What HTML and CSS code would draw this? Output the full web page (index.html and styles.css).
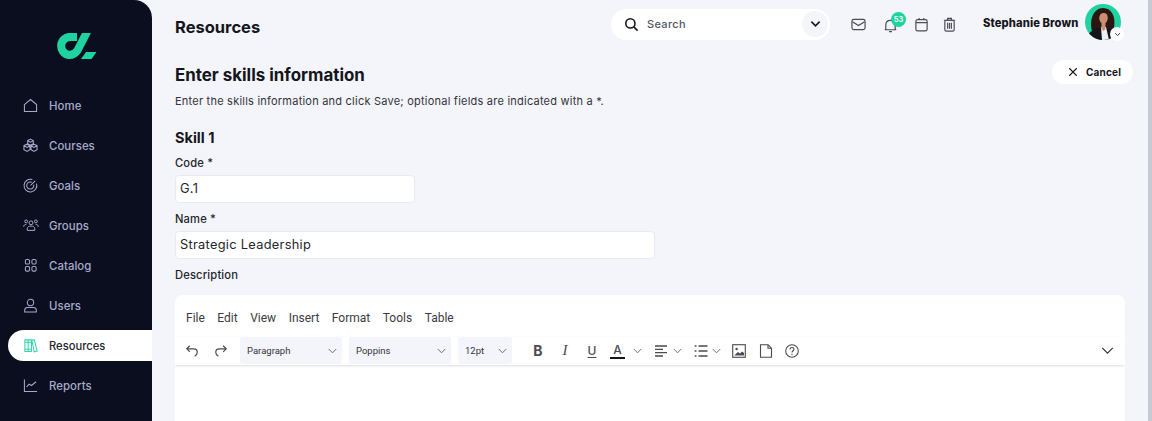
FILE: index.html
```html
<!DOCTYPE html>
<html lang="en">
<head>
<meta charset="utf-8">
<title>Resources</title>
<link rel="stylesheet" href="styles.css">
</head>
<body>
<div class="app">
  <aside class="sidebar">
    <div class="logo">
      <svg width="40" height="26" viewBox="0 0 40 26" fill="none">
        <path d="M21 4H15.500A9 9 0 0 0 13 22C17.500 22 19.500 20.500 21.500 17.300L31.500 -2" stroke="#1fd3a0" stroke-width="8"/>
        <path d="M30 19H40.500L35.500 26H25Z" fill="#1fd3a0"/>
      </svg>
    </div>
    <nav class="nav">
      <a class="nav-item"><svg class="nav-icon" viewBox="0 0 16 16"><path d="M1.500 7 8 1.600 14.500 7V14.500H1.500Z"/></svg>Home</a>
      <a class="nav-item"><svg class="nav-icon" viewBox="0 0 16 16"><path d="M8 1.200 11 2.800V6L8 7.600 5 6V2.800ZM4.300 6.600 7.400 8.200V12.600L4.300 14.400 1 12.600V8.200ZM11.700 6.600 15 8.200V12.600L11.700 14.400 8.600 12.600V8.200ZM5 2.800 8 4.400 11 2.800M1 8.200 4.300 10 7.400 8.200M8.600 8.200 11.700 10 15 8.200"/></svg>Courses</a>
      <a class="nav-item"><svg class="nav-icon" viewBox="0 0 16 16"><path d="M10 1.600A6.800 6.800 0 1 0 14.400 6M9.400 4.600A3.800 3.800 0 1 0 11.400 7M8 8 13 3"/></svg>Goals</a>
      <a class="nav-item"><svg class="nav-icon wide" viewBox="0 0 18 16"><circle cx="9" cy="5" r="2.200"/><circle cx="3.500" cy="3.400" r="1.600"/><circle cx="14.500" cy="3.400" r="1.600"/><path d="M4.800 13.500V11.600C4.800 9.600 6.600 8.600 9 8.600S13.200 9.600 13.200 11.600V13.500ZM.8 9.500C.8 7.500 2 6.800 3.800 6.800M17.200 9.500C17.200 7.500 16 6.800 14.200 6.800"/></svg>Groups</a>
      <a class="nav-item"><svg class="nav-icon" viewBox="0 0 16 16"><rect x="2.500" y="1.500" width="4.500" height="5" rx="1.500"/><rect x="9.500" y="1.500" width="4.500" height="5" rx="1.500"/><rect x="2.500" y="9" width="4.500" height="5" rx="1.500"/><rect x="9.500" y="9" width="4.500" height="5" rx="1.500"/></svg>Catalog</a>
      <a class="nav-item"><svg class="nav-icon" viewBox="0 0 16 16"><circle cx="8" cy="4.800" r="3.400"/><path d="M1.800 15V13C1.800 11 3.400 10.200 5 10.200H11C12.600 10.200 14.200 11 14.200 13V15Z"/></svg>Users</a>
      <a class="nav-item active"><svg class="nav-icon green" viewBox="0 0 16 16"><path d="M2 2H5.500V14.500H2ZM5.500 2H9V14.500H5.500ZM9.500 2.400 12 1.800 15 14 12 14.700ZM2 4.500H5.500M5.500 4.500H9M2 12H9"/></svg>Resources</a>
      <a class="nav-item"><svg class="nav-icon" viewBox="0 0 16 16"><path d="M1.500 1.500V14.500H15M3.800 9.500 6.500 6.500 9 8 14 4"/></svg>Reports</a>
    </nav>
  </aside>

  <main class="main">
    <header class="topbar">
      <h1 class="page-title">Resources</h1>
      <div class="search">
        <svg class="search-icon" viewBox="0 0 16 16"><circle cx="6.800" cy="6.800" r="4.900"/><path d="M10.500 10.500 14.500 14.500"/></svg>
        <span class="search-text">Search</span>
        <span class="search-toggle"><svg viewBox="0 0 12 8"><path d="M1.500 1.500 6 6 10.500 1.500"/></svg></span>
      </div>
      <div class="tools">
        <svg class="tool" viewBox="0 0 16 16"><rect x="1" y="2.500" width="14" height="11" rx="2"/><path d="M1.500 5 8 9 14.500 5"/></svg>
        <span class="bell">
          <svg class="tool" viewBox="0 0 16 16"><path d="M3 12V7.500C3 4.500 5 2.500 8 2.500S13 4.500 13 7.500V12L14 12.500H2ZM6.500 14.500H9.500"/></svg>
          <span class="badge">53</span>
        </span>
        <svg class="tool" viewBox="0 0 16 16"><rect x="2" y="2.800" width="12" height="12" rx="1.800"/><path d="M2 6H14M5.500 1V2.800M10.500 1V2.800"/></svg>
        <svg class="tool" viewBox="0 0 16 16"><rect x="3" y="3.500" width="10" height="11.500" rx="1.800"/><path d="M2 3.500H14M6 3.500V1.500H10V3.500M6 6V12.500M8 6V12.500M10 6V12.500"/></svg>
      </div>
      <div class="user">
        <span class="user-name">Stephanie Brown</span>
        <span class="avatar">
          <svg viewBox="0 0 36 36" width="36" height="36">
            <clipPath id="av"><circle cx="18" cy="18" r="18"/></clipPath>
            <g clip-path="url(#av)">
              <rect width="36" height="36" fill="#1fd3a0"/>
              <path d="M7 27C4 15 9 4 18 4S31 13 29 24L31 29H8Z" fill="#2b1712"/>
              <path d="M1 36C2 29 8 25 15 24H22C26 25 29 27 30 36Z" fill="#14141a"/>
              <path d="M16 23H21L24 36H17Z" fill="#eef0f2"/>
              <ellipse cx="18.500" cy="14" rx="4.300" ry="5.800" fill="#c98f75"/>
              <path d="M16.500 19H20.500V25L18.500 27 16.500 25Z" fill="#c98f75"/>
              <path d="M14 13C15 9 18 8 23 10C22 7 19 6 17 7C14 8 13 11 14 13Z" fill="#2b1712"/>
            </g>
          </svg>
          <span class="avatar-toggle"><svg viewBox="0 0 10 6"><path d="M1.500 1 5 4.500 8.500 1"/></svg></span>
        </span>
      </div>
    </header>

    <section class="content">
      <div class="intro">
        <div class="intro-text">
          <h2 class="heading">Enter skills information</h2>
          <p class="lead">Enter the skills information and click Save; optional fields are indicated with a *.</p>
        </div>
        <button class="cancel"><svg viewBox="0 0 12 12"><path d="M1.500 1.500 10.500 10.500M10.500 1.500 1.500 10.500"/></svg>Cancel</button>
      </div>
      <h3 class="skill">Skill 1</h3>
      <label class="label">Code *</label>
      <div class="input short">G.1</div>
      <label class="label">Name *</label>
      <div class="input long">Strategic Leadership</div>
      <label class="label">Description</label>

      <div class="editor">
        <div class="menubar">
          <span>File</span><span>Edit</span><span>View</span><span>Insert</span><span>Format</span><span>Tools</span><span>Table</span>
        </div>
        <div class="toolbar">
          <svg class="tb hist" viewBox="0 0 16 16"><path d="M5.500 2 2 5.500 5.500 9M2 5.500H10C12.500 5.500 14 7.500 14 9.500S13 13 11 14"/></svg>
          <svg class="tb hist gap-hist" viewBox="0 0 16 16"><path d="M10.500 2 14 5.500 10.500 9M14 5.500H6C3.500 5.500 2 7.500 2 9.500S3 13 5 14"/></svg>
          <span class="select s1">Paragraph<svg viewBox="0 0 10 6"><path d="M.8 .8 5 5 9.200 .8"/></svg></span>
          <span class="select s2">Poppins<svg viewBox="0 0 10 6"><path d="M.8 .8 5 5 9.200 .8"/></svg></span>
          <span class="select s3">12pt<svg viewBox="0 0 10 6"><path d="M.8 .8 5 5 9.200 .8"/></svg></span>
          <span class="fmt f-b">B</span>
          <span class="fmt f-i">I</span>
          <span class="fmt f-u">U</span>
          <span class="fmt f-a">A</span>
          <svg class="chev c-a" viewBox="0 0 10 6"><path d="M.8 .8 5 5 9.200 .8"/></svg>
          <svg class="tb t-align" viewBox="0 0 14 14"><path d="M1 2H13M1 5.300H9M1 8.600H13M1 12H9"/></svg>
          <svg class="chev" viewBox="0 0 10 6"><path d="M.8 .8 5 5 9.200 .8"/></svg>
          <svg class="tb t-list" viewBox="0 0 14 14"><path d="M4.500 2H13.500M4.500 7H13.500M4.500 12H13.500M.7 2H2.500M.7 7H2.500M.7 12H2.500"/></svg>
          <svg class="chev" viewBox="0 0 10 6"><path d="M.8 .8 5 5 9.200 .8"/></svg>
          <svg class="tb t-img" viewBox="0 0 14 14"><rect x=".7" y=".7" width="12.600" height="12.600"/><circle cx="4.600" cy="5" r="1.200" class="solid"/><path class="solid" d="M2.200 11.500 6 8 8 9.500 10 7.500 12 9V11.500Z"/></svg>
          <svg class="tb t-doc" viewBox="0 0 14 14"><path d="M1.500 .7H9L12.500 4.200V13.300H1.500ZM9 .7V4.200H12.500"/></svg>
          <svg class="tb t-help" viewBox="0 0 14 14"><circle cx="7" cy="7" r="6.300"/><path d="M5 5.500C5 4 6 3.500 7 3.500S9 4.200 9 5.300C9 6.800 7 6.800 7 8.600M7 9.800V11"/></svg>
          <svg class="more" viewBox="0 0 14 8"><path d="M1 1 7 7 13 1"/></svg>
        </div>
        <div class="editor-body"></div>
      </div>
    </section>
  </main>
  <div class="scrollbar"></div>
</div>
</body>
</html>
```

FILE: styles.css
```css
* { box-sizing: border-box; }
html, body { margin: 0; height: 100%; overflow: hidden; }
body {
  font-family: Inter, "Open Sans", sans-serif;
  background: #f4f5fa;
  color: #15161c;
}
svg { fill: none; stroke: currentColor; stroke-width: 1.1; display: block; flex: none; }
.logo svg { stroke: none; }

.app { display: flex; height: 421px; }

.sidebar {
  width: 152px;
  flex: none;
  background: #0a0e1f;
  border-top-right-radius: 18px;
  padding: 33px 0 0 8px;
}
.logo { padding-left: 48px; height: 26px; }
.logo svg { overflow: hidden; }
.nav { display: flex; flex-direction: column; gap: 9px; margin-top: 31px; }
.nav-item {
  height: 31px;
  display: flex;
  align-items: center;
  gap: 11px;
  padding-left: 15px;
  font-size: 11.400px;
  font-weight: 500;
  letter-spacing: .05px;
  color: #a6abcb;
  border-radius: 16px 0 0 16px;
}
.nav-icon { width: 15px; height: 15px; color: #a6abcb; }
.nav-icon.wide { width: 16px; margin-right: -1px; }
.nav-item.active { background: #fff; color: #23242c; letter-spacing: 0; font-size: 11.200px; }
.nav-icon.green { color: #31d6a8; }

.main { flex: 1; min-width: 0; padding-left: 23px; display: flex; flex-direction: column; }

.topbar { display: flex; align-items: center; height: 40px; margin-top: 4px; flex: none; }
.page-title { margin: 0; width: 436px; font-size: 16.500px; font-weight: 700; position: relative; top: 3px; }
.search {
  width: 219px;
  height: 31px;
  background: #fff;
  border-radius: 16px;
  display: flex;
  align-items: center;
  padding: 0 2px 0 13px;
  position: relative;
}
.search-icon { width: 15px; height: 15px; stroke-width: 1.700; color: #17181e; }
.search-text { margin-left: 8px; flex: 1; font-size: 11px; letter-spacing: .35px; color: #55565f; font-weight: 500; }
.search-toggle {
  width: 26px; height: 26px; border-radius: 50%;
  background: #f4f5fa;
  display: flex; align-items: center; justify-content: center;
}
.search-toggle svg { width: 11px; height: 8px; stroke-width: 1.800; color: #17181e; }

.tools { display: flex; align-items: center; margin-left: 21px; color: #4a4b54; }
.tool { width: 15px; height: 15px; stroke-width: 1.250; }
.bell { position: relative; top: 1px; margin: 0 16px 0 17px; display: block; }
.badge {
  position: absolute; left: 8px; top: -6px;
  width: 15px; height: 15px; border-radius: 50%;
  background: #1fd3a0; color: #fff;
  font-size: 7.500px; font-weight: 600;
  display: flex; align-items: center; justify-content: center;
}
.tools > .tool:last-child { margin-left: 13px; }

.user { display: flex; align-items: center; margin-left: 26px; }
.user-name { font-size: 11.200px; font-weight: 800; letter-spacing: .1px; color: #15161c; width: 102px; position: relative; top: -1px; }
.avatar { position: relative; top: -2px; width: 36px; height: 36px; display: block; }
.avatar svg { stroke: none; }
.avatar-toggle {
  position: absolute; right: -3px; bottom: -1px;
  width: 14px; height: 14px; border-radius: 50%;
  background: #fff; display: flex; align-items: center; justify-content: center;
}
.avatar-toggle svg { width: 7px; height: 5px; stroke: #17181e; stroke-width: 1.200; }

.content { padding-right: 23px; }
.intro { display: flex; justify-content: space-between; align-items: flex-start; margin-top: 16px; }
.heading { margin: 0; font-size: 16.900px; font-weight: 700; line-height: 22px; position: relative; top: 4px; }
.lead { margin: 11px 0 0; font-size: 11px; line-height: 16px; color: #33343c; letter-spacing: .225px; }
.cancel {
  width: 81px; height: 24px;
  border: 0; background: #fff; border-radius: 12px;
  font: 700 10px Inter, sans-serif;
  letter-spacing: .2px;
  color: #15161c;
  display: flex; align-items: center; justify-content: flex-start;
  padding: 0 0 0 16px;
  gap: 8px;
  position: relative;
  margin-right: -8px;
}
.cancel svg { width: 10px; height: 10px; stroke-width: 1.300; }

.skill { margin: 19px 0 0; font-size: 14.500px; font-weight: 700; line-height: 20px; }
.label { display: block; font-size: 11.200px; font-weight: 500; line-height: 16px; margin-top: 7px; color: #24252c; letter-spacing: .15px; }
.input {
  height: 28px;
  margin-top: 4px;
  background: #fff;
  border: 1px solid #e9eaf1;
  border-radius: 4px;
  padding-left: 4px;
  font-size: 12.800px;
  line-height: 26px;
  letter-spacing: .3px;
  color: #24252c;
}
.input + .label { margin-top: 8px; }
.short { width: 240px; }
.long { width: 480px; }

.editor { margin-top: 12px; width: 950px; background: #fff; border-radius: 8px 8px 0 0; height: 140px; overflow: hidden; }
.menubar {
  display: flex; gap: 12.500px;
  height: 42px; padding: 15px 0 0 11px;
  font-family: Roboto, sans-serif;
  font-size: 12px;
  line-height: 16px;
  color: #3a3b43;
}
.toolbar {
  height: 28px;
  display: flex; align-items: center;
  padding: 0 11px 1px 10px;
  box-shadow: 0 1px 2px rgba(40,44,70,.16);
  color: #4a4b52;
}
.tb { width: 15px; height: 15px; }
.hist { width: 14px; height: 14px; stroke-width: 1.350; }
.gap-hist { margin-left: 15px; }
.select {
  height: 27px; background: #f4f5fa; border-radius: 3px;
  display: flex; align-items: center; justify-content: space-between;
  font-family: Roboto, sans-serif; font-size: 9.500px; color: #33343c;
  padding: 0 5px 0 7px; margin-left: 7px;
}
.select svg, .chev { width: 9px; height: 6px; color: #6a6b73; }
.s1 { width: 102px; margin-left: 12px; }
.s2 { width: 102px; }
.s3 { width: 54px; }
.fmt { font-family: Inter, sans-serif; font-size: 14px; width: 14px; text-align: center; }
.f-b { font-weight: 700; margin-left: 19px; }
.f-i { font-style: italic; font-weight: 400; margin-left: 13px; font-family: "Liberation Serif", serif; font-size: 15px; }
.f-u { text-decoration: underline; text-underline-offset: 2px; margin-left: 13px; font-size: 12px; font-weight: 500; }
.f-a { margin-left: 11px; font-size: 12px; font-weight: 500; width: 15px; border-bottom: 2px solid #15161c; line-height: 14px; }
.c-a { margin-left: 8px; }
.t-align { margin-left: 12px; width: 14px; height: 14px; stroke-width: 1.300; }
.t-align + .chev { margin-left: 5px; }
.t-list { margin-left: 12px; width: 14px; height: 14px; stroke-width: 1.300; }
.t-list + .chev { margin-left: 4px; }
.t-img { margin-left: 11px; width: 14px; height: 14px; }
.solid { fill: currentColor; stroke: none; }
.t-doc { margin-left: 13px; width: 14px; height: 14px; }
.t-help { margin-left: 12px; width: 14px; height: 14px; }
.more { margin-left: auto; width: 13px; height: 7px; stroke-width: 1.400; color: #33343c; }
.editor-body { height: 70px; }

.scrollbar { width: 4px; flex: none; background: #c6c8d2; }
```
